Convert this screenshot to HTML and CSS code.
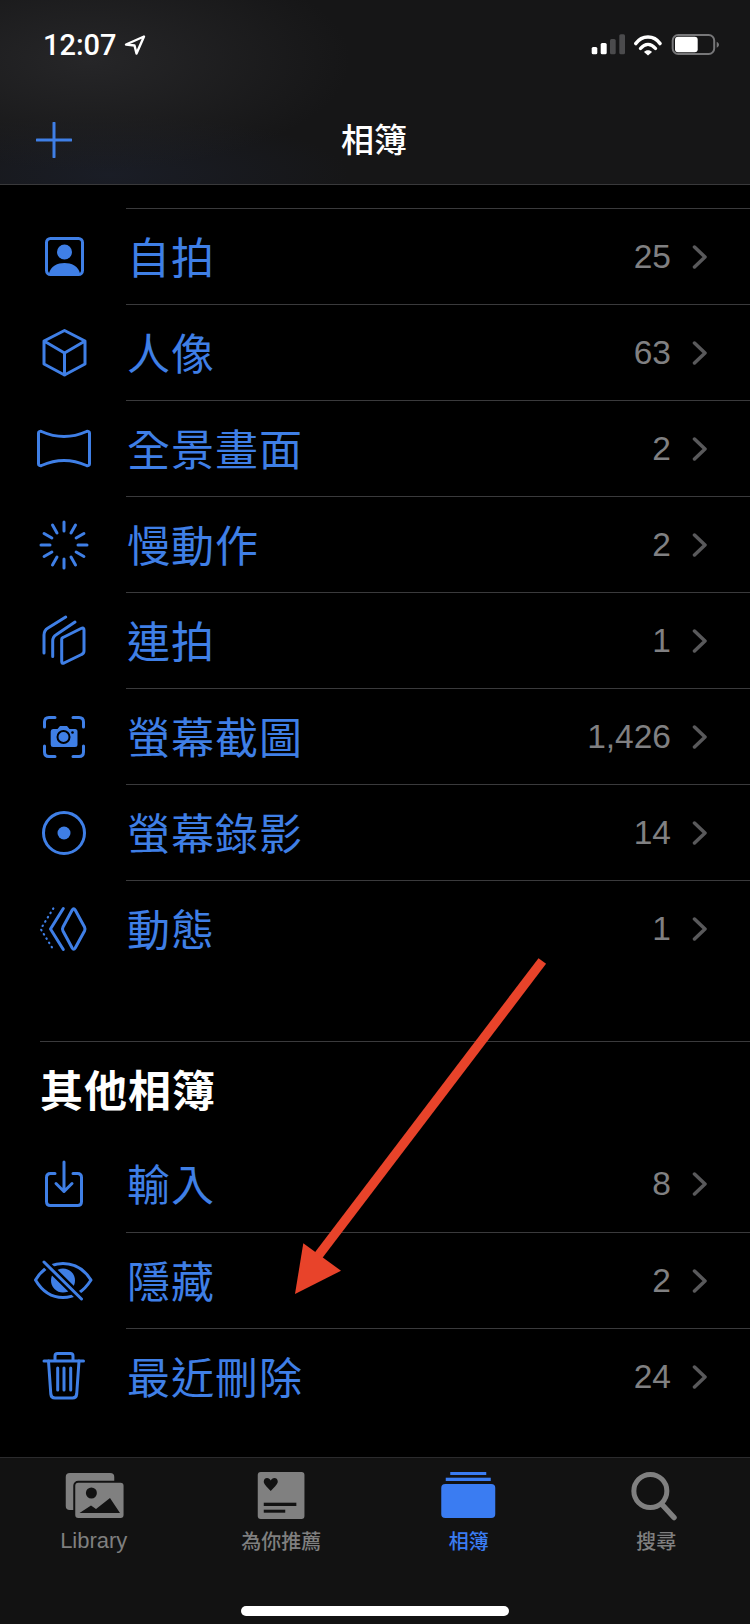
FILE: index.html
```html
<!DOCTYPE html>
<html>
<head>
  <title>相簿</title>
  <link rel="stylesheet" href="styles.css">
</head>
<body>
  <header class="top">
    <div class="status">
      <div class="status-left">
        <span class="time">12:07</span>
        <svg class="loc" width="22" height="20" viewBox="0 0 22 20">
          <path d="M20 1.500 L2 9.500 L10.500 10.500 L12.500 18.500 Z" fill="none" stroke="#fff" stroke-width="2.400" stroke-linejoin="round"/>
        </svg>
      </div>
      <svg class="status-right" width="130" height="24" viewBox="0 0 130 24">
        <rect x="1.700" y="13" width="5.600" height="7.300" rx="1.500" fill="#fff"/>
        <rect x="10.700" y="9" width="6" height="11.300" rx="1.500" fill="#fff"/>
        <rect x="20" y="5" width="5.700" height="15.300" rx="1.500" fill="#4b4b4d"/>
        <rect x="29.300" y="0.300" width="5.700" height="20" rx="1.500" fill="#4b4b4d"/>
        <path d="M45.800 9.500 C52 0.800 64 0.800 70 9.500" fill="none" stroke="#fff" stroke-width="3.600" stroke-linecap="round"/>
        <path d="M50.500 14.500 C55 9 61 9 65.500 14.500" fill="none" stroke="#fff" stroke-width="3.400" stroke-linecap="round"/>
        <path d="M54 18 L58 21.500 L62 18 C60 15.500 56 15.500 54 18 Z" fill="#fff"/>
        <rect x="82.700" y="1" width="41.500" height="19" rx="5.500" fill="none" stroke="#777779" stroke-width="2"/>
        <rect x="85" y="2.700" width="22.700" height="15.600" rx="3" fill="#fff"/>
        <path d="M126.700 7.700 C128.500 8.500 129 9.700 129 10.700 C129 11.700 128.500 12.900 126.700 13.700 Z" fill="#777779"/>
      </svg>
    </div>
    <div class="nav">
      <svg class="plus" width="36" height="36" viewBox="0 0 36 36">
        <path d="M18 1 V35 M1 18 H35" stroke="#3f7fe6" stroke-width="3" stroke-linecap="round"/>
      </svg>
      <h1 class="title">相簿</h1>
    </div>
  </header>

  <main class="content">
    <div class="group">
      <div class="row">
        <div class="row-icon">
          <svg class="ic" width="64" height="64" viewBox="0 0 64 64">
            <rect x="14.500" y="14.500" width="36" height="36" rx="4"/>
            <circle class="solid" cx="32.500" cy="28" r="7.500"/>
            <path class="solid" d="M17 50 C18 42 26 39 32.500 39 C39 39 47 42 48 50 Z"/>
          </svg>
        </div>
        <div class="row-body">
          <span class="name">自拍</span><span class="count">25</span>
          <svg class="chev" width="16" height="24" viewBox="0 0 16 24"><path d="M2.500 2 L13 12 L2.500 22"/></svg>
        </div>
      </div>
      <div class="row">
        <div class="row-icon">
          <svg class="ic" width="64" height="64" viewBox="0 0 64 64">
            <path d="M32.500 10.500 L53 21 V44 L32.500 55 L12 44 V21 Z M12 21 L32.500 33 L53 21 M32.500 33 V55"/>
          </svg>
        </div>
        <div class="row-body">
          <span class="name">人像</span><span class="count">63</span>
          <svg class="chev" width="16" height="24" viewBox="0 0 16 24"><path d="M2.500 2 L13 12 L2.500 22"/></svg>
        </div>
      </div>
      <div class="row">
        <div class="row-icon">
          <svg class="ic" width="64" height="64" viewBox="0 0 64 64">
            <path d="M6.500 17 C6.500 15.500 8 15 9.500 15.500 C24 22 40 22 54.500 15.500 C56 15 57.500 15.500 57.500 17 V48 C57.500 49.500 56 50 54.500 49.500 C40 43 24 43 9.500 49.500 C8 50 6.500 49.500 6.500 48 Z"/>
          </svg>
        </div>
        <div class="row-body">
          <span class="name">全景畫面</span><span class="count">2</span>
          <svg class="chev" width="16" height="24" viewBox="0 0 16 24"><path d="M2.500 2 L13 12 L2.500 22"/></svg>
        </div>
      </div>
      <div class="row">
        <div class="row-icon">
          <svg class="ic" width="64" height="64" viewBox="0 0 64 64">
            <g transform="translate(32 33)">
              <path d="M0 -23 V-14"/>
              <path d="M0 -23 V-14" transform="rotate(30)"/>
              <path d="M0 -23 V-14" transform="rotate(60)"/>
              <path d="M0 -23 V-14" transform="rotate(90)"/>
              <path d="M0 -23 V-14" transform="rotate(120)"/>
              <path d="M0 -23 V-14" transform="rotate(150)"/>
              <path d="M0 -23 V-14" transform="rotate(180)"/>
              <path d="M0 -23 V-14" transform="rotate(210)"/>
              <path d="M0 -23 V-14" transform="rotate(240)"/>
              <path d="M0 -23 V-14" transform="rotate(270)"/>
              <path d="M0 -23 V-14" transform="rotate(300)"/>
              <path d="M0 -23 V-14" transform="rotate(330)"/>
            </g>
          </svg>
        </div>
        <div class="row-body">
          <span class="name">慢動作</span><span class="count">2</span>
          <svg class="chev" width="16" height="24" viewBox="0 0 16 24"><path d="M2.500 2 L13 12 L2.500 22"/></svg>
        </div>
      </div>
      <div class="row">
        <div class="row-icon">
          <svg class="ic" width="64" height="64" viewBox="0 0 64 64">
            <path d="M31 29.500 L49 20.500 Q52 19 52 22 V43 Q52 45.500 49.500 46.500 L32 55 Q29.700 56 29.700 53.500 V31 Q29.700 30 31 29.500 Z"/>
            <path d="M20.700 48.500 V33 C20.700 30 22 28 24.500 26.500 L43 14"/>
            <path d="M12 45 V27 C12 24 13.500 21.500 16 20 L33.700 9"/>
          </svg>
        </div>
        <div class="row-body">
          <span class="name">連拍</span><span class="count">1</span>
          <svg class="chev" width="16" height="24" viewBox="0 0 16 24"><path d="M2.500 2 L13 12 L2.500 22"/></svg>
        </div>
      </div>
      <div class="row">
        <div class="row-icon">
          <svg class="ic" width="64" height="64" viewBox="0 0 64 64">
            <path d="M12.500 23 V18 Q12.500 13.500 17 13.500 H23 M41 13.500 H47 Q51.500 13.500 51.500 18 V23 M51.500 42 V48 Q51.500 52.500 47 52.500 H41 M23 52.500 H17 Q12.500 52.500 12.500 48 V42"/>
            <path class="solid" d="M21 25 H25.500 L28 22 H35 L37.500 25 H43 Q45.500 25 45.500 27.500 V40.500 Q45.500 43 43 43 H21 Q18.700 43 18.700 40.500 V27.500 Q18.700 25 21 25 Z"/>
            <circle cx="31.500" cy="33" r="6" stroke="#000" stroke-width="2"/>
            <circle cx="40.500" cy="28.500" r="1.300" fill="#000" stroke="none"/>
          </svg>
        </div>
        <div class="row-body">
          <span class="name">螢幕截圖</span><span class="count">1,426</span>
          <svg class="chev" width="16" height="24" viewBox="0 0 16 24"><path d="M2.500 2 L13 12 L2.500 22"/></svg>
        </div>
      </div>
      <div class="row">
        <div class="row-icon">
          <svg class="ic" width="64" height="64" viewBox="0 0 64 64">
            <circle cx="32" cy="33" r="20.500"/>
            <circle class="solid" cx="32" cy="33" r="6.500"/>
          </svg>
        </div>
        <div class="row-body">
          <span class="name">螢幕錄影</span><span class="count">14</span>
          <svg class="chev" width="16" height="24" viewBox="0 0 16 24"><path d="M2.500 2 L13 12 L2.500 22"/></svg>
        </div>
      </div>
      <div class="row">
        <div class="row-icon">
          <svg class="ic" width="64" height="64" viewBox="0 0 64 64">
            <path d="M40.200 14 Q41.700 11.500 43.200 14 L52.500 31 Q53.500 33 52.500 35 L43.200 52 Q41.700 54.500 40.200 52 L31 35 Q30 33 31 31 Z"/>
            <path d="M31.300 12.500 L18.500 33 L31.300 53.500"/>
            <path class="dots" d="M21.300 12.500 L8.700 33 L21.300 53.500"/>
          </svg>
        </div>
        <div class="row-body">
          <span class="name">動態</span><span class="count">1</span>
          <svg class="chev" width="16" height="24" viewBox="0 0 16 24"><path d="M2.500 2 L13 12 L2.500 22"/></svg>
        </div>
      </div>
    </div>

    <h2 class="section">其他相簿</h2>

    <div class="group">
      <div class="row">
        <div class="row-icon">
          <svg class="ic" width="64" height="64" viewBox="0 0 64 64">
            <path d="M23 21.500 H18.500 Q14.500 21.500 14.500 25.500 V49.500 Q14.500 53.500 18.500 53.500 H45.500 Q49.500 53.500 49.500 49.500 V25.500 Q49.500 21.500 45.500 21.500 H41"/>
            <path d="M32 10 V39.500 M24 31.500 L32 39.500 L40 31.500"/>
          </svg>
        </div>
        <div class="row-body no-line">
          <span class="name">輸入</span><span class="count">8</span>
          <svg class="chev" width="16" height="24" viewBox="0 0 16 24"><path d="M2.500 2 L13 12 L2.500 22"/></svg>
        </div>
      </div>
      <div class="row">
        <div class="row-icon">
          <svg class="ic" width="64" height="64" viewBox="0 0 64 64">
            <path d="M3.500 32 C10 21 20 15.500 31 15.500 C42 15.500 52 21 59 32 C52 43 42 49.500 31 49.500 C20 49.500 10 43 3.500 32 Z"/>
            <circle class="solid" cx="31" cy="32.500" r="12"/>
            <path d="M12 14 L49.500 51" stroke="#000" stroke-width="8"/>
            <path d="M12 14 L49.500 51"/>
          </svg>
        </div>
        <div class="row-body">
          <span class="name">隱藏</span><span class="count">2</span>
          <svg class="chev" width="16" height="24" viewBox="0 0 16 24"><path d="M2.500 2 L13 12 L2.500 22"/></svg>
        </div>
      </div>
      <div class="row">
        <div class="row-icon">
          <svg class="ic" width="64" height="64" viewBox="0 0 64 64">
            <path d="M12 17 H51.500 M23 17 V12 Q23 9.500 25.500 9.500 H38.500 Q41 9.500 41 12 V17"/>
            <path d="M16.500 17 L18.800 50 Q19.200 54 23 54 H40.500 Q44.300 54 44.700 50 L47 17"/>
            <path d="M25.700 24 V46 M32 24 V46 M38.700 24 V46"/>
          </svg>
        </div>
        <div class="row-body">
          <span class="name">最近刪除</span><span class="count">24</span>
          <svg class="chev" width="16" height="24" viewBox="0 0 16 24"><path d="M2.500 2 L13 12 L2.500 22"/></svg>
        </div>
      </div>
    </div>
  </main>

  <footer class="tabbar">
    <nav class="tabs">
      <div class="tab">
        <svg width="64" height="50" viewBox="0 0 64 50">
          <rect x="3.750" y="2" width="48.500" height="37" rx="4" fill="#808080"/>
          <rect x="12.250" y="10.700" width="50.300" height="37.300" rx="4" fill="#808080" stroke="#121212" stroke-width="2"/>
          <circle cx="29.400" cy="22" r="5.500" fill="#121212"/>
          <path d="M17.500 42 L29 34.500 L34 38 L48 27 L58 42 Z" fill="#121212"/>
        </svg>
        <span class="tab-label latin">Library</span>
      </div>
      <div class="tab">
        <svg width="64" height="50" viewBox="0 0 64 50">
          <rect x="8.750" y="1" width="46.700" height="47" rx="3" fill="#808080"/>
          <path d="M21.750 20 C17 15 14.750 13 14.750 10.500 C14.750 8 16.500 7 18 7 C19.800 7 21 8 21.750 9.500 C22.500 8 23.700 7 25.500 7 C27 7 28.750 8 28.750 10.500 C28.750 13 26.500 15 21.750 20 Z" fill="#121212"/>
          <rect x="14.750" y="31.700" width="32.600" height="3.300" fill="#121212"/>
          <rect x="14.750" y="38.700" width="21.500" height="3" fill="#121212"/>
        </svg>
        <span class="tab-label">為你推薦</span>
      </div>
      <div class="tab active">
        <svg width="64" height="50" viewBox="0 0 64 50">
          <rect x="13.250" y="1" width="36" height="3" fill="#3a7cf2"/>
          <rect x="8.750" y="6.700" width="45" height="3.300" fill="#3a7cf2"/>
          <rect x="4.250" y="13" width="54" height="34" rx="4" fill="#3a7cf2"/>
        </svg>
        <span class="tab-label">相簿</span>
      </div>
      <div class="tab">
        <svg width="64" height="50" viewBox="0 0 64 50">
          <circle cx="26.350" cy="20" r="16.500" fill="none" stroke="#808080" stroke-width="5"/>
          <path d="M38.500 34 L50 46.500" stroke="#808080" stroke-width="5.500" stroke-linecap="round"/>
        </svg>
        <span class="tab-label">搜尋</span>
      </div>
    </nav>
    <div class="home-bar"></div>
  </footer>

  <svg class="arrow" width="270" height="350" viewBox="0 0 270 350">
    <path d="M252.300 11 L28 306" stroke="#e8432a" stroke-width="9.500"/>
    <path d="M5 344 L13.300 293.300 L51 320.700 Z" fill="#e8432a"/>
  </svg>
</body>
</html>
```

FILE: styles.css
```css
* {
  box-sizing: border-box;
}

html, body {
  margin: 0;
  padding: 0;
}

body {
  position: relative;
  display: flex;
  flex-direction: column;
  width: 750px;
  height: 1624px;
  overflow: hidden;
  background-color: #000;
  font-family: "Noto Sans CJK TC", "Noto Sans", sans-serif;
}

/* top bars */
.top {
  height: 185px;
  border-bottom: 1px solid #39393b;
  background:
    radial-gradient(ellipse 260px 110px at 90px 60px, #262628, transparent),
    radial-gradient(ellipse 240px 60px at 110px 175px, #1a1d26, transparent),
    #161617;
}

.status {
  display: flex;
  justify-content: space-between;
  height: 92px;
  padding: 28px 30px 0 43px;
}

.status-left {
  display: flex;
  align-items: flex-start;
  gap: 7px;
}

.time {
  color: #fff;
  font-family: "Roboto", sans-serif;
  font-size: 29px;
  font-weight: 500;
  line-height: 34px;
}

.loc {
  margin-top: 7px;
}

.status-right {
  margin-top: 6px;
}

.nav {
  position: relative;
  display: flex;
  justify-content: center;
  align-items: center;
  height: 92px;
  padding-right: 2px;
}

.plus {
  position: absolute;
  left: 36px;
  top: 30px;
}

.title {
  margin: 0;
  color: #fff;
  font-size: 33px;
  font-weight: 500;
  line-height: 92px;
}

/* album rows */
.content {
  flex: 1;
  padding-top: 23px;
}

.row {
  display: flex;
  height: 96px;
}

.row-icon {
  display: flex;
  justify-content: center;
  align-items: center;
  flex: none;
  width: 126px;
  padding-left: 2px;
}

.ic {
  fill: none;
  stroke: #3f7fe6;
  stroke-width: 3;
  stroke-linecap: round;
  stroke-linejoin: round;
}

.ic .solid {
  fill: #3f7fe6;
  stroke: none;
}

.ic .dots {
  stroke-width: 2.200;
  stroke-dasharray: 0.500 4.500;
}

.row-body {
  display: flex;
  align-items: center;
  flex: 1;
  padding-right: 42px;
  border-top: 1px solid #3a3a3c;
}

.row-body.no-line {
  border-top: none;
}

.name {
  flex: 1;
  margin-bottom: 4px;
  padding-left: 1px;
  color: #3f7fe6;
  font-size: 43px;
  font-weight: 400;
  letter-spacing: 1px;
  line-height: 60px;
}

.count {
  color: #808082;
  font-family: "Liberation Sans", sans-serif;
  font-size: 33.500px;
}

.chev {
  margin-left: 21px;
  fill: none;
  stroke: #59595b;
  stroke-width: 3.500;
  stroke-linecap: round;
  stroke-linejoin: round;
}

.section {
  height: 95px;
  margin: 65px 0 0 40px;
  border-top: 1px solid #3a3a3c;
  color: #fff;
  font-size: 43px;
  font-weight: 700;
  letter-spacing: 1px;
  line-height: 92px;
}

/* bottom tab bar */
.tabbar {
  height: 167px;
  border-top: 1px solid #2b2b2d;
  background-color: #121212;
}

.tabs {
  display: grid;
  grid-template-columns: repeat(4, 1fr);
  padding-top: 13px;
}

.tab {
  display: flex;
  flex-direction: column;
  align-items: center;
}

.tab-label {
  margin-top: 6px;
  color: #7f7f7f;
  font-size: 20px;
  font-weight: 500;
  line-height: 28px;
}

.tab-label.latin {
  font-family: "Liberation Sans", sans-serif;
  font-size: 22px;
  font-weight: 400;
}

.tab.active .tab-label {
  color: #3a7cf2;
}

.home-bar {
  width: 268px;
  height: 10px;
  margin: 51px 0 0 241px;
  border-radius: 5px;
  background-color: #fff;
}

/* annotation over the list */
.arrow {
  position: absolute;
  left: 290px;
  top: 950px;
}
```
